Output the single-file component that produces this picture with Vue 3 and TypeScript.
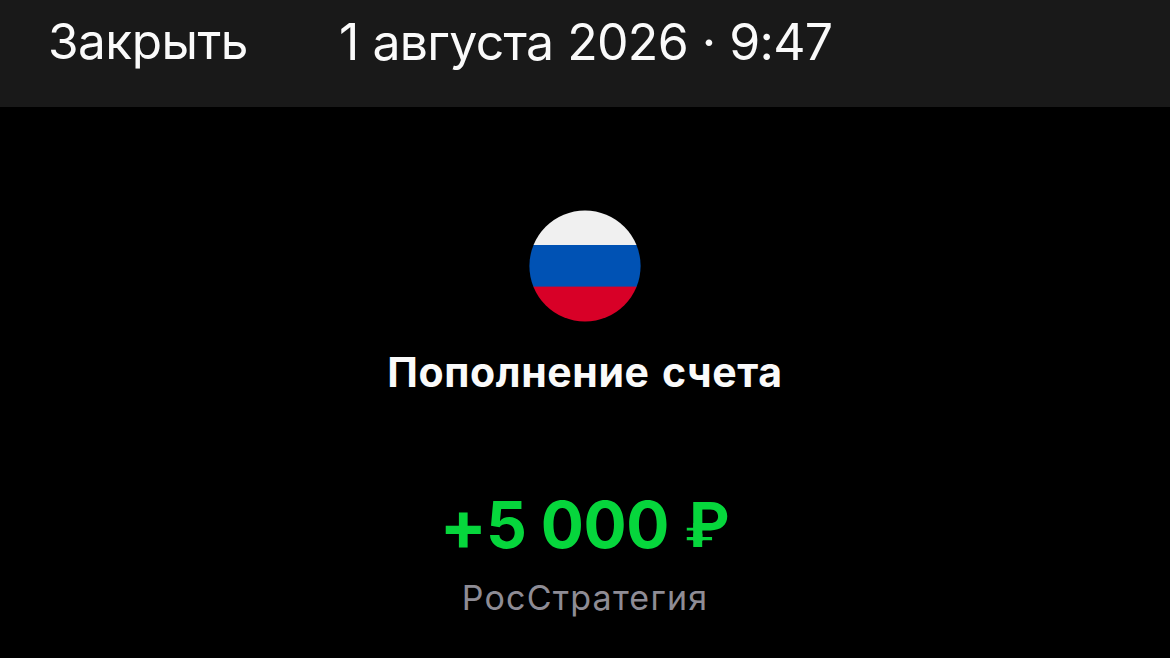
<script setup lang="ts">
const operation = {
  date: '1 августа 2026 · 9:47',
  title: 'Пополнение счета',
  sign: '+',
  amount: '5 000',
  currency: '₽',
  company: 'РосСтратегия',
}
</script>

<template>
  <main class="screen">
    <header class="bar">
      <button class="close" type="button">Закрыть</button>
      <time class="date">{{ operation.date }}</time>
    </header>
    <section class="details">
      <svg class="flag" viewBox="0 0 112 112" aria-hidden="true">
        <clipPath id="round"><circle cx="56" cy="56" r="55.6" /></clipPath>
        <g clip-path="url(#round)">
          <rect width="112" height="35" fill="#f0f0f0" />
          <rect y="35" width="112" height="42" fill="#0052b4" />
          <rect y="76.6" width="112" height="36" fill="#d80027" />
        </g>
      </svg>
      <h1 class="title">{{ operation.title }}</h1>
      <p class="amount"><span class="sign">{{ operation.sign }}</span><span class="digits">{{ operation.amount }}</span><span class="currency">{{ operation.currency }}</span></p>
      <p class="company">{{ operation.company }}</p>
    </section>
  </main>
</template>

<style>
body { background: #000; overflow: hidden; }
</style>

<style scoped>
.screen { width: 1170px; height: 658px; background: #000; color: #fafafa; font-family: Inter, "Liberation Sans", sans-serif; overflow: hidden; }
.bar { height: 107px; box-sizing: border-box; background: #191919; display: flex; align-items: flex-start; padding: 12px 0 0 48px; font-size: 50px; line-height: 61px; white-space: nowrap; }
.close { width: 291px; flex: none; margin-top: -1px; padding: 0; border: 0; background: none; color: inherit; font: inherit; font-size: 49.5px; letter-spacing: -0.5px; text-align: left; }
.date { letter-spacing: -0.7px; word-spacing: 0.4px; }
.details { display: flex; flex-direction: column; align-items: center; padding-top: 103px; white-space: nowrap; }
.flag { width: 112px; height: 112px; display: block; }
.title { margin: 25px 0 0; font-size: 41px; line-height: 50px; font-weight: 680; letter-spacing: 0.6px; word-spacing: 2px; }
.amount { display: flex; align-items: flex-start; width: 291px; margin: 88px 0 0; height: 80px; font-size: 64px; line-height: 80px; font-weight: 680; color: #06d63c; }
.sign { flex: none; width: 46.6px; font-size: 70px; }
.digits { flex: none; width: 198px; letter-spacing: -0.4px; word-spacing: -0.6px; }
/* Slim crossbars on the currency sign */
.currency {
  flex: none;
  font-size: 61.5px;
  font-weight: 700;
  clip-path: polygon(9px 0, 60px 0, 60px 47.8px, 18.5px 47.8px, 18.5px 52px, 60px 52px, 60px 55.3px, 18.5px 55.3px, 18.5px 80px, 9px 80px, 9px 55.3px, 0 55.3px, 0 52px, 9px 52px, 9px 46.5px, 0 46.5px, 0 42.8px, 9px 42.8px);
}
.company { margin: 11px 0 0; font-size: 34px; line-height: 44px; color: #8e8c95; letter-spacing: 1.2px; }
</style>
